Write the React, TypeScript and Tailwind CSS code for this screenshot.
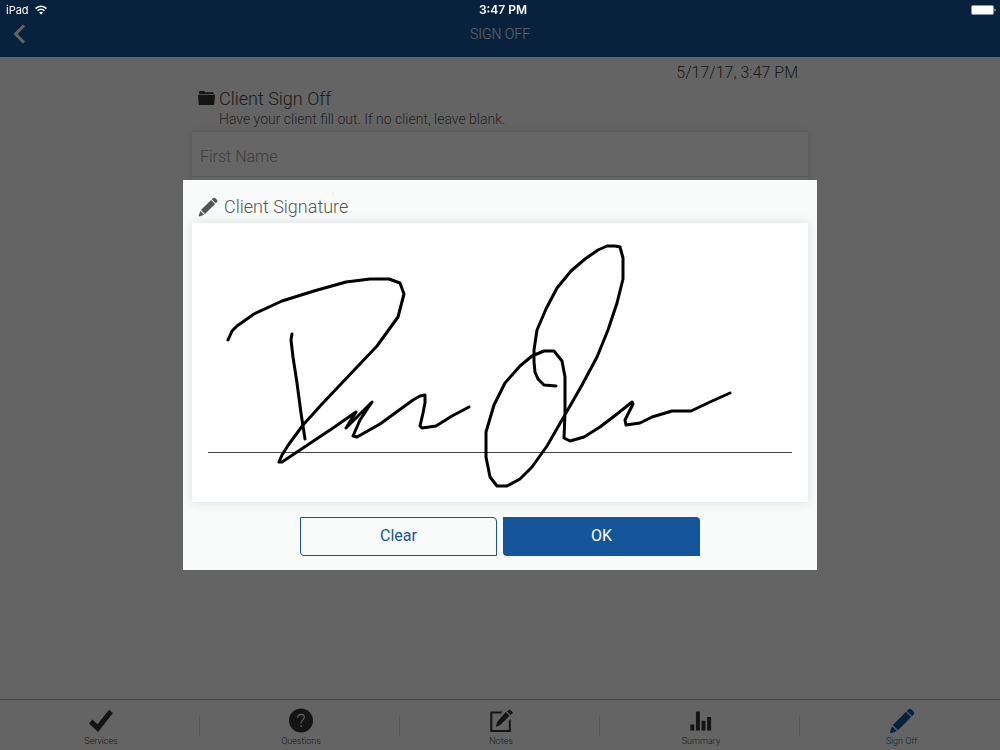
import type { ReactNode } from 'react'

const signature = [
  'M36 117 40 108 45 103 62 91 90 78 122 68 154 59 178 56 197 56 208 60 212 71 206 94 185 123 130 181 111 202 97 221 90 232 87 239 90 239 111 225 141 205 164 189 154 205 180 179 168 197 161 213 165 214 188 201 221 177 228 173 233 172 233 180 231 190 228 203 230 205 244 203 260 193 277 184',
  'M100 111 99 117 101 134 105 160 109 190 113 216',
  'M364 163 352 162 346 156 343 149 342 139 342 127 345 107 354 86 365 65 379 48 393 36 406 27 415 23 423 23 428 24 431 35 431 56 425 80 416 107 405 134 390 162 374 190 355 223 340 244 328 256 315 263 305 263 298 254 294 234 294 209 302 182 313 160 328 143 340 133 352 128 362 128 370 138 373 154 373 190 372 215 378 218 392 214 408 204 425 191 440 179 441 181 433 197 434 202 448 200 460 194 480 188 499 188 518 179 538 170'
]

function PencilIcon({ className }: { className: string }) {
  return (
    <svg viewBox="0 0 26 26" className={className} fill="currentColor" aria-hidden="true">
      <path d="M19.300 1.500c1-.9 2.300-.9 3.200 0l2 2c.9.9.9 2.200 0 3.200l-1.500 1.500-5.200-5.200z" />
      <path d="M17 3.800 22.200 9 9 22.200 3.800 17z" />
      <path d="M3 18.200 7.900 23 1.900 25.200 .9 24.400z" />
    </svg>
  )
}

const tabs: { label: string; active?: boolean; icon: ReactNode }[] = [
  {
    label: 'Services',
    icon: (
      <svg viewBox="0 0 26 26" className="size-[26px]" fill="currentColor" aria-hidden="true">
        <path d="M1 15.400 4.400 11.600 9.600 16.200 21 1.800 25 4.900 10 24z" />
      </svg>
    )
  },
  {
    label: 'Questions',
    icon: (
      <svg viewBox="0 0 26 26" className="size-[26px]" aria-hidden="true">
        <circle cx="13" cy="12.500" r="12" fill="currentColor" />
        <path d="M9.800 9.700c0-2.100 1.300-3.300 3.300-3.300s3.200 1.100 3.200 2.900c0 2.400-3.200 2.900-3.200 5.500v.700" fill="none" stroke="#fafafa" strokeWidth="1.100" />
        <path d="M12.400 17.500h1.400v1.400h-1.400z" fill="#fafafa" />
      </svg>
    )
  },
  {
    label: 'Notes',
    icon: (
      <svg viewBox="0 0 26 26" className="size-[26px]" fill="currentColor" aria-hidden="true">
        <path d="M2.300 3.500h12.500l-2 2H4.300v16.500h16.500v-9l2-2v13H2.300z" />
        <path d="M17.800 4 21.700 7.800 11.900 17.300 7.800 18.700 9.100 13.900z" />
        <path d="M20.600 2c.5-.5 1.200-.5 1.700 0l2 1.800c.5.500.5 1.200 0 1.700l-1.600 1.500-3.700-3.600z" />
      </svg>
    )
  },
  {
    label: 'Summary',
    icon: (
      <svg viewBox="0 0 26 26" className="size-[26px]" fill="currentColor" aria-hidden="true">
        <path d="M2.300 16.500h4v6h-4zM7.900 3.500h4v19h-4zM13.500 12.800h4v9.700h-4zM19.100 9h4v13.500h-4z" />
      </svg>
    )
  },
  { label: 'Sign Off', active: true, icon: <PencilIcon className="size-[26px]" /> }
]

function StatusBar() {
  return (
    <div className="relative z-20 grid h-5 grid-cols-3 items-center pl-1.5 pr-1 font-['Inter',sans-serif] text-[11px] font-normal text-white">
      <div className="flex items-center gap-1.5">
        <span>iPad</span>
        <svg viewBox="0 0 12 10" className="h-[10px] w-3" fill="none" stroke="currentColor" strokeWidth="1.600" aria-hidden="true">
          <path d="M.6 3.600c3-3.200 7.800-3.200 10.800 0M2.600 5.800c1.900-2 4.900-2 6.800 0" />
          <path d="M6 9.500 4 7.500c1.100-1.100 2.900-1.100 4 0z" fill="currentColor" stroke="none" />
        </svg>
      </div>
      <div className="pl-1 text-center text-xs font-semibold">3:47 PM</div>
      <svg viewBox="0 0 25 10" className="h-[10px] w-[25px] justify-self-end" aria-hidden="true">
        <rect x=".5" y=".5" width="22" height="9" rx="1.500" fill="#fff" stroke="#8c9aaa" />
        <path d="M23.500 3.500c1.500.3 1.500 2.700 0 3z" fill="#c5ccd4" />
      </svg>
    </div>
  )
}

export default function App() {
  return (
    <div className="flex min-h-screen flex-col bg-[#fafafa] font-['Roboto',sans-serif] font-light text-[#444]">
      <header className="bg-[#15559a]">
        <StatusBar />
        <div className="grid h-[37px] grid-cols-3 items-start px-3">
          <button type="button" aria-label="Back" className="mt-1 w-4 text-[#fafafa]">
            <svg viewBox="0 0 14 20" className="h-5 w-[14px]" fill="none" stroke="currentColor" strokeWidth="3" aria-hidden="true">
              <path d="M12 1.500 3.500 10 12 18.500" />
            </svg>
          </button>
          <h1 className="mt-1 text-center text-sm font-light leading-5 text-[#fafafa]">SIGN OFF</h1>
        </div>
      </header>

      <main className="mx-auto w-full max-w-[616px] grow">
        <p className="pr-2.5 pt-1 text-right text-base leading-6">5/17/17, 3:47 PM</p>
        <div className="mt-0.5 flex gap-1 pl-1.5">
          <svg viewBox="0 0 17 14" className="mt-1 h-[14px] w-[17px] text-[#333]" fill="currentColor" aria-hidden="true">
            <path d="M1 3V1.200C1 .5 1.400 0 2 0h4.200l1 1.200h7.300c.8 0 1.200.4 1.200 1V3z" />
            <path d="M0 3.800h17l-.7 9.200c0 .6-.4 1-1 1H1.700c-.6 0-1-.4-1-1z" />
          </svg>
          <div>
            <h2 className="text-lg font-light leading-6">Client Sign Off</h2>
            <p className="text-sm leading-4 text-[#555]">Have your client fill out. If no client, leave blank.</p>
          </div>
        </div>
        <form className="mt-[5px] h-[135px] bg-white shadow-[0_0_8px_rgba(0,0,0,0.15)]">
          <input
            type="text"
            aria-label="First Name"
            placeholder="First Name"
            className="block h-[45px] w-full border-b border-[#ddd] px-2 pt-1 text-base outline-none placeholder:text-[#999]"
          />
        </form>
      </main>

      <nav className="grid h-[51px] grid-cols-5 border-t border-[#aaa]">
        {tabs.map((tab) => (
          <div key={tab.label} className="group flex items-center">
            <a href="#" className={`flex flex-1 flex-col items-center self-start pl-[3px] pt-2 ${tab.active ? 'text-[#15559a]' : 'text-[#444]'}`}>
              <span className={tab.active ? '' : 'text-[#333]'}>{tab.icon}</span>
              <span className="pt-px text-[9px] leading-3">{tab.label}</span>
            </a>
            <span className="h-[21px] w-px bg-[#ddd] group-last:hidden" />
          </div>
        ))}
      </nav>

      <div className="fixed inset-0 z-10 flex items-center justify-center bg-black/60">
        <section role="dialog" aria-modal="true" aria-labelledby="signature-title" className="w-[634px] max-w-full bg-[#f9fbfa] px-[9px] pb-[14px]">
          <div className="flex h-[43px] items-center gap-1.5 pl-1.5 pt-2.5">
            <PencilIcon className="size-5 text-[#555]" />
            <h2 id="signature-title" className="text-lg font-light leading-6 text-[#555]">Client Signature</h2>
          </div>
          <div className="bg-white shadow-[0_0_10px_rgba(40,50,80,0.15)]">
            <svg viewBox="0 0 616 279" className="block w-full" role="img" aria-label="Signature" fill="none">
              <path d="M16 229.500h584" stroke="#444" strokeWidth="1" />
              {signature.map((d) => (
                <path key={d} d={d} stroke="#000" strokeWidth="3" strokeLinecap="round" strokeLinejoin="round" />
              ))}
            </svg>
          </div>
          <div className="mx-auto mt-[15px] grid w-[400px] max-w-full grid-cols-2 gap-1.5 text-base font-normal">
            <button type="button" className="h-[39px] rounded-bl rounded-tr border border-[#15559a] pb-0.5 text-[#15559a]">Clear</button>
            <button type="button" className="h-[39px] rounded-bl rounded-tr bg-[#15559a] pb-0.5 text-white">OK</button>
          </div>
        </section>
      </div>
    </div>
  )
}
